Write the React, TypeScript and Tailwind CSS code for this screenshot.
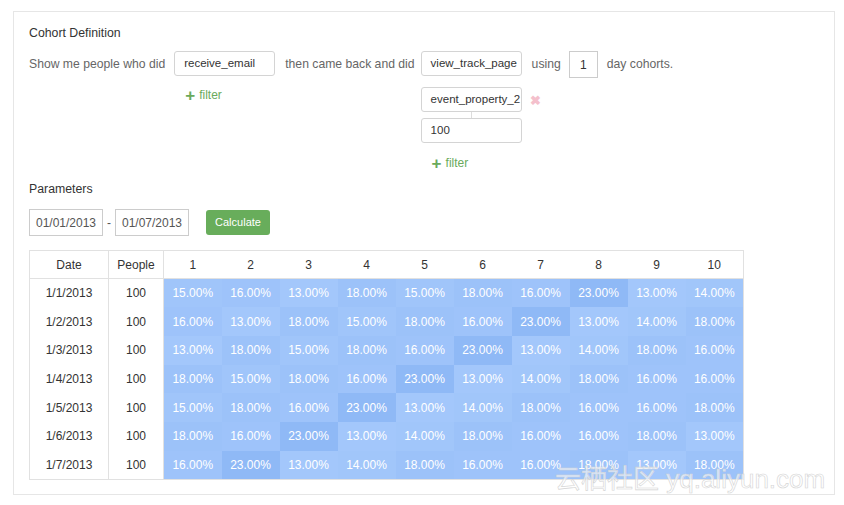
const rows: [string, number[]][] = [
  ["1/1/2013", [15, 16, 13, 18, 15, 18, 16, 23, 13, 14]],
  ["1/2/2013", [16, 13, 18, 15, 18, 16, 23, 13, 14, 18]],
  ["1/3/2013", [13, 18, 15, 18, 16, 23, 13, 14, 18, 16]],
  ["1/4/2013", [18, 15, 18, 16, 23, 13, 14, 18, 16, 16]],
  ["1/5/2013", [15, 18, 16, 23, 13, 14, 18, 16, 16, 18]],
  ["1/6/2013", [18, 16, 23, 13, 14, 18, 16, 16, 18, 13]],
  ["1/7/2013", [16, 23, 13, 14, 18, 16, 16, 18, 13, 18]],
];

const shade: Record<number, string> = {
  13: "bg-[#a3c7fb]",
  14: "bg-[#a1c6fa]",
  15: "bg-[#a0c5fa]",
  16: "bg-[#9ec3fa]",
  18: "bg-[#9cc2f9]",
  23: "bg-[#8fb9f6]",
};

function Filter() {
  return (
    <div className="flex items-center gap-[4px] text-[12px] text-[#6aaa5c]">
      <span className="text-[17px] font-bold leading-none">+</span>
      <span>filter</span>
    </div>
  );
}

function Field({ value }: { value: string }) {
  return (
    <div className="w-[101px] h-[25px] flex items-center px-[9px] border border-[#d4d4d4] rounded-[3px] text-[11.5px] text-[#333] bg-white overflow-hidden whitespace-nowrap">
      {value}
    </div>
  );
}

export default function App() {
  return (
    <div className="w-[844px] h-[505px] bg-white font-['Liberation_Sans',Arial,sans-serif] pt-[11px] pl-[13px] relative">
      <div className="w-[822px] h-[484px] border border-[#e6e6e6] pl-[15px] pt-[13px]">
        <div className="text-[12.3px] leading-[16px] text-[#333]">Cohort Definition</div>

        <div className="flex items-start mt-[10px] text-[12.2px] text-[#666]">
          <div className="h-[26px] flex items-center">Show me people who did</div>
          <div className="ml-[9px] flex flex-col">
            <Field value="receive_email" />
            <div className="mt-[10px] pl-[11px]">
              <Filter />
            </div>
          </div>
          <div className="ml-[10px] h-[26px] flex items-center">then came back and did</div>
          <div className="ml-[6px] flex flex-col">
            <Field value="view_track_page" />
            <div className="mt-[11px] relative">
              <Field value="event_property_2" />
              <span className="absolute left-[109px] top-[4px] text-[13px] font-bold text-[#f4c0cc]">✖</span>
            </div>
            <div className="h-[6px] ml-[50px] border-l border-[#ddd]" />
            <Field value="100" />
            <div className="mt-[11px] pl-[11px]">
              <Filter />
            </div>
          </div>
          <div className="ml-[10px] h-[26px] flex items-center">using</div>
          <div className="ml-[8px] w-[29px] h-[27px] flex items-center justify-center border border-[#ccc] text-[12px] text-[#333]">
            1
          </div>
          <div className="ml-[9px] h-[26px] flex items-center">day cohorts.</div>
        </div>

        <div className="mt-[9px] text-[12.3px] leading-[16px] text-[#333]">Parameters</div>

        <div className="mt-[12px] flex items-center">
          <div className="w-[74px] h-[27px] flex items-center justify-center border border-[#ccc] text-[12px] text-[#555]">
            01/01/2013
          </div>
          <span className="mx-[4px] text-[12px] text-[#555]">-</span>
          <div className="w-[74px] h-[27px] flex items-center justify-center border border-[#ccc] text-[12px] text-[#555]">
            01/07/2013
          </div>
          <button className="ml-[17px] w-[64px] h-[25px] rounded-[3px] bg-[#68ad5b] text-white text-[11px]">
            Calculate
          </button>
        </div>

        <table className="mt-[14px] border-collapse border border-[#e1e1e1] text-[12px] text-[#333]">
          <thead>
            <tr className="h-[28px] border-b border-[#e1e1e1]">
              <th className="w-[79px] font-normal border-r border-[#e1e1e1]">Date</th>
              <th className="w-[55px] font-normal border-r border-[#e1e1e1]">People</th>
              {[1, 2, 3, 4, 5, 6, 7, 8, 9, 10].map((n) => (
                <th key={n} className="w-[58px] font-normal">
                  {n}
                </th>
              ))}
            </tr>
          </thead>
          <tbody>
            {rows.map(([date, vals]) => (
              <tr key={date} className="h-[28.7px]">
                <td className="text-center border-r border-[#e1e1e1]">{date}</td>
                <td className="text-center border-r border-[#e1e1e1]">100</td>
                {vals.map((v, i) => (
                  <td key={i} className={`text-center text-white ${shade[v]}`}>
                    {v}.00%
                  </td>
                ))}
              </tr>
            ))}
          </tbody>
        </table>
      </div>

      <div className="absolute left-[555px] top-[463px] text-[26px] leading-[32px] text-white/60 [-webkit-text-stroke:0.6px_#d4d4d4] font-['Liberation_Sans','Noto_Sans_CJK_SC',sans-serif] whitespace-nowrap pointer-events-none">
        云栖社区 yq.aliyun.com
      </div>
    </div>
  );
}
